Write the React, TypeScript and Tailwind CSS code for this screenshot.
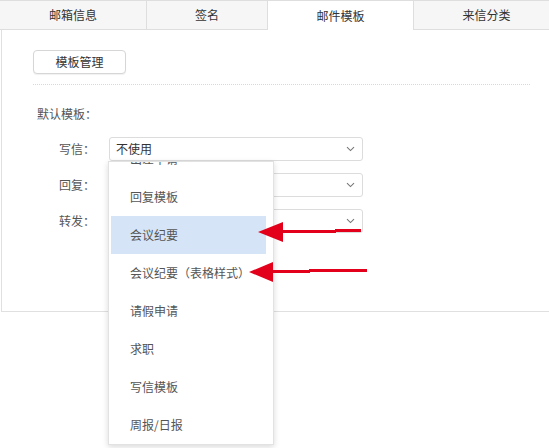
import React from "react";

const tabs = ["邮箱信息", "签名", "邮件模板", "来信分类"];
const tabWidths = ["w-[147px]", "w-[121px]", "w-[146px]", "w-[146px]"];

const items = [
  "出差申请",
  "回复模板",
  "会议纪要",
  "会议纪要（表格样式）",
  "请假申请",
  "求职",
  "写信模板",
  "周报/日报",
];

function Chevron() {
  return (
    <svg width="9" height="6" viewBox="0 0 9 6" className="shrink-0">
      <path d="M1 1.2 L4.5 4.6 L8 1.2" fill="none" stroke="#777" strokeWidth="1.1" />
    </svg>
  );
}

function Select({ value }: { value?: string }) {
  return (
    <div className="flex h-[24px] w-[254px] items-center justify-between rounded-[3px] border border-[#dcdcdc] bg-white pl-[6px] pr-[7px] text-[12px] text-[#333]">
      <span>{value ?? ""}</span>
      <Chevron />
    </div>
  );
}

export default function App() {
  return (
    <div className="relative h-[448px] w-[549px] overflow-hidden bg-white font-['Noto_Sans_CJK_SC','Noto_Sans',sans-serif] text-[12px]">
      {/* tab bar */}
      <div className="flex h-[30px] w-[560px]">
        {tabs.map((t, i) => (
          <div
            key={t}
            className={
              tabWidths[i] +
              " flex shrink-0 items-center justify-center border-r border-t border-[#dedede] text-[#333] " +
              (i === 2 ? "bg-white border-b-0" : "bg-[#f6f6f6] border-b")
            }
          >
            {t}
          </div>
        ))}
      </div>

      {/* panel */}
      <div className="ml-[1px] h-[282px] w-[600px] border-b border-l border-[#e0e0e0] pl-[31px] pt-[20px]">
        <button className="flex h-[24px] w-[93px] items-center justify-center rounded-[4px] border border-[#d6d6d6] bg-white text-[12px] text-[#333] shadow-[0_1px_1px_rgba(0,0,0,0.06)]">
          模板管理
        </button>
        <div className="mt-[10px] w-[497px] border-t border-dotted border-[#d8d8d8]" />

        <div className="mt-[20px] ml-[4px] h-[18px] leading-[18px] text-[#555]">默认模板：</div>

        <div className="mt-[14px] flex flex-col gap-[12px]">
          {[
            { label: "写信：", value: "不使用" },
            { label: "回复：" },
            { label: "转发：" },
          ].map((r) => (
            <div key={r.label} className="flex items-center gap-[14px]">
              <span className="w-[62px] text-right text-[#555]">{r.label}</span>
              <Select value={r.value} />
            </div>
          ))}
        </div>
      </div>

      {/* open dropdown */}
      <div className="absolute left-[108px] top-[161px] h-[284px] w-[166px] overflow-hidden border border-[#e2e2e2] bg-white shadow-[0_2px_6px_rgba(0,0,0,0.15)]">
        <ul className="ml-[2px] mr-[7px] mt-[-22px]">
          {items.map((it, i) => (
            <li
              key={it}
              className={
                "flex h-[38px] items-center pl-[19px] text-[12px] text-[#555] " +
                (i === 2 ? "bg-[#d5e5f7]" : "")
              }
            >
              {it}
            </li>
          ))}
        </ul>
      </div>

      {/* annotation arrows */}
      <svg className="pointer-events-none absolute left-0 top-0" width="549" height="448">
        <polygon points="258,232 283,222 283,242" fill="#e2001a" />
        <rect x="282" y="230" width="54" height="3" fill="#e2001a" />
        <rect x="335" y="229" width="26" height="3" fill="#e2001a" />
        <polygon points="249,272 273,262 273,282" fill="#e2001a" />
        <rect x="272" y="270" width="38" height="3" fill="#e2001a" />
        <rect x="309" y="269" width="58" height="3" fill="#e2001a" />
      </svg>
    </div>
  );
}
